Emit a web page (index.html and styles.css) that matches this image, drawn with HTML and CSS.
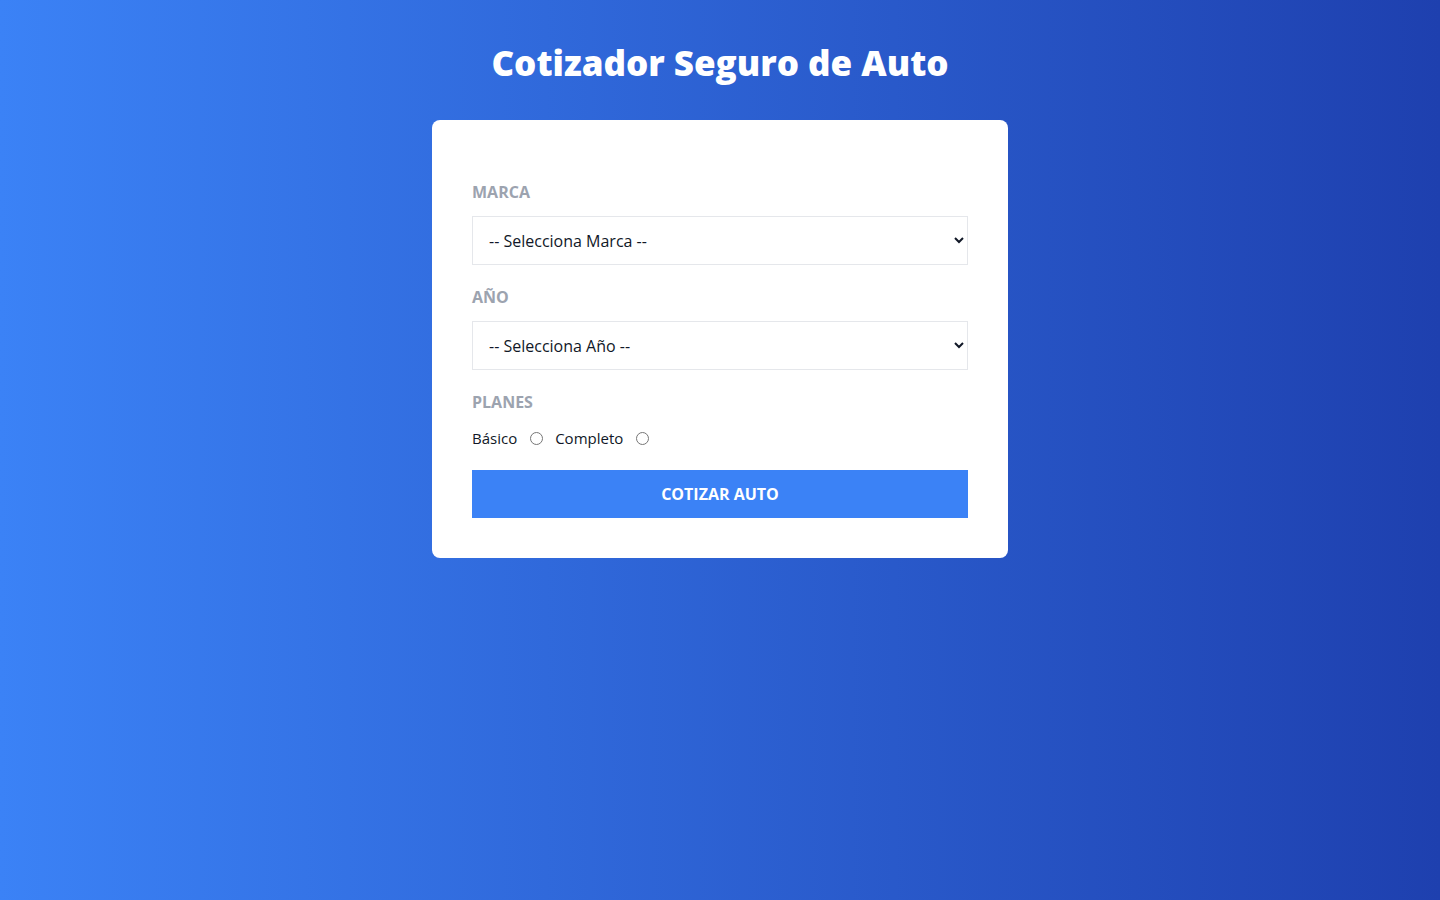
FILE: index.html
```html
<!DOCTYPE html>
<html lang="es">
<head>
<meta charset="utf-8">
<title>Cotizador Seguro de Auto</title>
<link rel="stylesheet" href="styles.css">
</head>
<body>
<header class="header">
  <h1 class="title">Cotizador Seguro de Auto</h1>
</header>
<main class="main">
  <form class="card">
    <div class="field">
      <label class="label" for="marca">Marca</label>
      <select id="marca" class="select">
        <option>-- Selecciona Marca --</option>
      </select>
    </div>
    <div class="field">
      <label class="label" for="year">Año</label>
      <select id="year" class="select">
        <option>-- Selecciona Año --</option>
      </select>
    </div>
    <div class="field">
      <span class="label">Planes</span>
      <div class="radios">
        <label class="radio-label" for="basico">Básico</label>
        <input class="radio" type="radio" name="plan" id="basico">
        <label class="radio-label" for="completo">Completo</label>
        <input class="radio" type="radio" name="plan" id="completo">
      </div>
    </div>
    <button type="button" class="button">Cotizar Auto</button>
  </form>
</main>
</body>
</html>
```
FILE: styles.css
```css
* { box-sizing: border-box; }
html, body { margin: 0; height: 100%; }
body {
  min-height: 100vh;
  background: linear-gradient(to right, #3b82f6, #1e40af);
  font-family: "Open Sans", "Noto Sans", sans-serif;
  color: #111827;
}
.header {
  padding-top: 43px;
  text-align: center;
}
.title {
  margin: 0;
  font-family: "Open Sans", "Noto Sans", sans-serif;
  font-weight: 800;
  font-size: 35px;
  line-height: 40px;
  color: #ffffff;
}
.main {
  display: flex;
  justify-content: center;
  margin-top: 37px;
}
.card {
  width: 576px;
  background: #ffffff;
  border-radius: 8px;
  padding: 40px;
}
.field {
  margin: 20px 0;
}
.label {
  display: block;
  font-weight: 700;
  font-size: 16px;
  line-height: 24px;
  text-transform: uppercase;
  color: #9ca3af;
  margin-bottom: 12px;
}
.select {
  display: block;
  width: 100%;
  height: 49px;
  padding: 0 12px;
  border: 1px solid #e5e7eb;
  border-radius: 0;
  background: #ffffff;
  font-family: inherit;
  font-size: 16px;
  color: #111827;
}
.radios {
  display: flex;
  align-items: center;
  height: 24px;
  font-size: 15px;
}
.radio-label { line-height: 24px; }
.radio {
  width: 13px;
  height: 13px;
  margin: 0 12px 0 13px;
}
.button {
  display: block;
  width: 100%;
  height: 48px;
  border: 0;
  background: #3b82f6;
  color: #ffffff;
  font-family: inherit;
  font-weight: 700;
  font-size: 16px;
  text-transform: uppercase;
  cursor: pointer;
}
```
